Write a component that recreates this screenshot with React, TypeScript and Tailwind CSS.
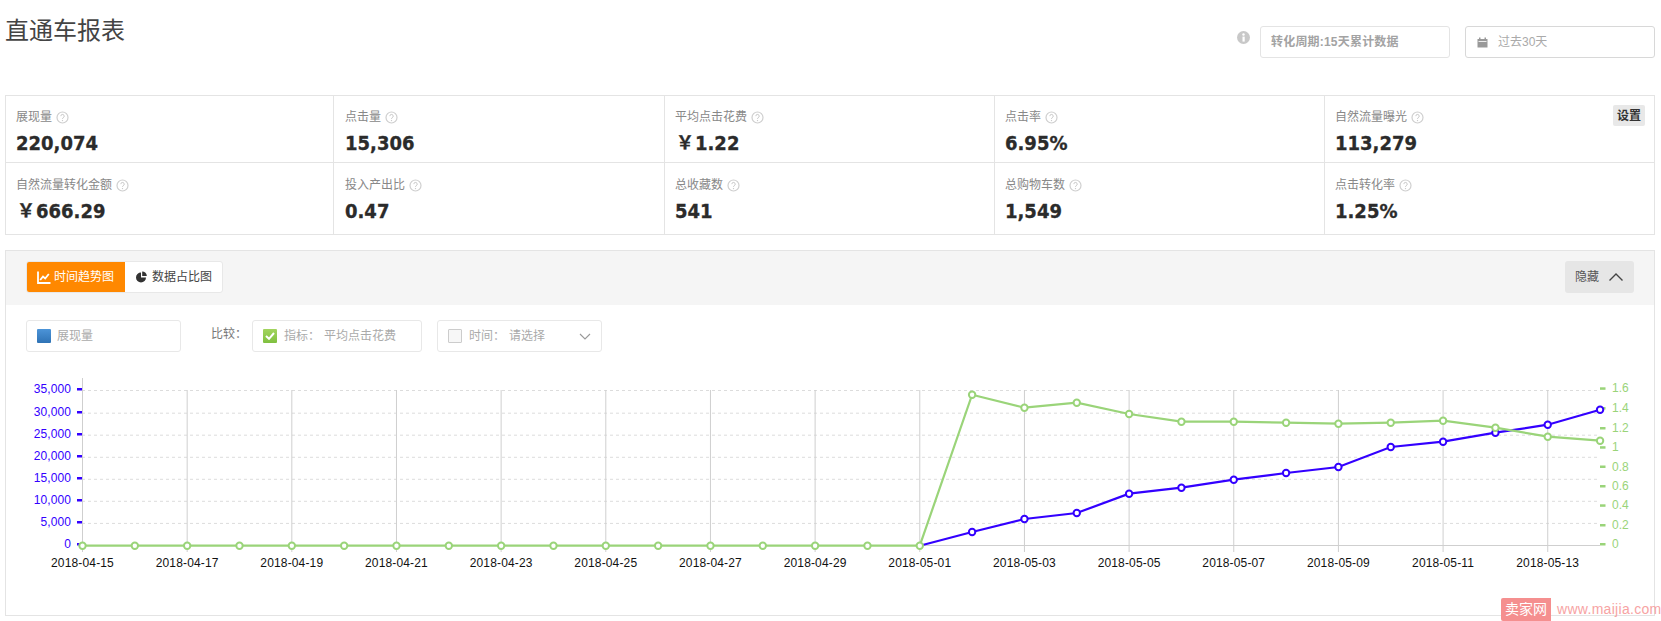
import React from "react";

const CJK = '"Liberation Sans","Noto Sans CJK SC",sans-serif';

const cells = [
  ["展现量", "220,074"],
  ["点击量", "15,306"],
  ["平均点击花费", "￥1.22"],
  ["点击率", "6.95%"],
  ["自然流量曝光", "113,279"],
  ["自然流量转化金额", "￥666.29"],
  ["投入产出比", "0.47"],
  ["总收藏数", "541"],
  ["总购物车数", "1,549"],
  ["点击转化率", "1.25%"],
];

function Help() {
  return (
    <svg width="13" height="13" viewBox="0 0 13 13" className="ml-[4px] shrink-0">
      <circle cx="6.5" cy="6.5" r="5.5" fill="none" stroke="#cfcfcf" strokeWidth="1.2" />
      <path d="M4.8 5.1a1.7 1.7 0 1 1 2.6 1.5c-.6.4-.9.7-.9 1.3" fill="none" stroke="#c4c4c4" strokeWidth="1" />
      <circle cx="6.5" cy="9.6" r=".7" fill="#c4c4c4" />
    </svg>
  );
}

function Cell({ label, value, index }: { label: string; value: string; index: number }) {
  const top = index < 5;
  const last = index % 5 === 4;
  const yen = value.startsWith("￥");
  const second = index % 5 === 1;
  return (
    <div
      className={`relative ${second ? "pl-[11px]" : "pl-[10px]"} ${top ? "h-[67px] border-b border-[#e4e4e4] pt-[11px]" : "h-[71px] pt-[12px]"} ${last ? "" : "border-r border-[#e4e4e4]"}`}
    >
      <div className="flex items-center h-[20px] text-[12px] text-[#888888]">
        {label}
        <Help />
      </div>
      <div
        className={`mt-[3px] text-[20px] leading-[26px] font-bold text-[#2b2b2b] [-webkit-text-stroke:0.3px_#2b2b2b] ${yen ? "flex items-center" : ""}`}
        style={{ fontFamily: '"DejaVu Sans Condensed","Noto Sans","Noto Sans CJK SC",sans-serif' }}
      >
        {yen ? (
          <>
            <span className="w-[20px] text-center text-[18px]" style={{ fontFamily: CJK }}>￥</span>
            {value.slice(1)}
          </>
        ) : (
          value
        )}
      </div>
      {index === 4 && (
        <div className="absolute right-[9px] top-[9px] w-[32px] h-[21px] rounded-[2px] bg-[#e8e8e8] text-[12px] font-bold text-[#333] flex items-center justify-center">
          设置
        </div>
      )}
    </div>
  );
}

const X0 = 82.5;
const STEP = 52.33;
const xAt = (i: number) => X0 + i * STEP;
const BLUE = "#3300ff";
const GREEN = "#9ad479";

const startDate = Date.UTC(2018, 3, 15);
const dateLabel = (i: number) => new Date(startDate + i * 86400000).toISOString().slice(0, 10);

const blueTail = [545.7, 532, 519, 513, 493.7, 487.7, 479.7, 473, 467, 447, 441.7, 432.7, 424.7, 409.7];
const greenTail = [394.7, 407.7, 402.7, 414, 421.7, 421.7, 422.7, 423.7, 422.7, 420.7, 427.7, 436.7, 440.7];

const greenPts: [number, number][] = [
  ...Array.from({ length: 17 }, (_, i) => [xAt(i), 545.7] as [number, number]),
  ...greenTail.map((y, i) => [xAt(17 + i), y] as [number, number]),
];
const bluePts: [number, number][] = blueTail.map((y, i) => [xAt(16 + i), y]);

const grid = [390, 412.7, 434.7, 456.8, 478.8, 500.8, 522.9];
const leftTicks: [string, number][] = [
  ["35,000", 389],
  ["30,000", 412],
  ["25,000", 434],
  ["20,000", 456],
  ["15,000", 478],
  ["10,000", 500],
  ["5,000", 522],
  ["0", 544],
];
const rightTicks: [string, number][] = [
  ["1.6", 388.3],
  ["1.4", 408],
  ["1.2", 428],
  ["1", 447.2],
  ["0.8", 466.5],
  ["0.6", 486],
  ["0.4", 505.3],
  ["0.2", 525],
  ["0", 544],
];

function Chart() {
  const even = Array.from({ length: 15 }, (_, i) => i * 2);
  return (
    <svg width="1648" height="230" viewBox="6 370 1648 230" className="block">
      {grid.map((y) => (
        <line key={y} x1={82} x2={1600} y1={y + 0.5} y2={y + 0.5} stroke="#dcdcdc" strokeDasharray="3 3" />
      ))}
      {even.map((i) => (
        <line key={i} x1={xAt(i)} x2={xAt(i)} y1={i === 0 ? 378 : 390} y2={552} stroke="#cfcfcf" />
      ))}
      <line x1={82} x2={1600} y1={545.5} y2={545.5} stroke="#cfcfcf" />
      {leftTicks.map(([t, y]) => (
        <g key={t}>
          <rect x={77} y={y - 1} width={5} height={2.5} fill={BLUE} />
          <text x={71} y={y + 4} textAnchor="end" fontSize="12" letterSpacing="0.1" fill={BLUE} fontFamily='"Liberation Sans",sans-serif'>
            {t}
          </text>
        </g>
      ))}
      {rightTicks.map(([t, y]) => (
        <g key={t}>
          <rect x={1600} y={y - 1} width={5.5} height={2.5} fill={GREEN} />
          <text x={1612} y={y + 4} fontSize="12" fill={GREEN} fontFamily='"Liberation Sans",sans-serif'>
            {t}
          </text>
        </g>
      ))}
      {even.map((i) => (
        <text key={i} x={xAt(i)} y={567} textAnchor="middle" fontSize="12" letterSpacing="0.15" fill="#111" fontFamily='"Liberation Sans",sans-serif'>
          {dateLabel(i)}
        </text>
      ))}
      <polyline points={bluePts.map((p) => p.join(",")).join(" ")} fill="none" stroke={BLUE} strokeWidth="2.2" />
      {bluePts.slice(1).map(([x, y]) => (
        <circle key={x} cx={x} cy={y} r={3.2} fill="#fff" stroke={BLUE} strokeWidth="2" />
      ))}
      <polyline points={greenPts.map((p) => p.join(",")).join(" ")} fill="none" stroke={GREEN} strokeWidth="2.2" />
      {greenPts.map(([x, y]) => (
        <circle key={x} cx={x} cy={y} r={3.2} fill="#fff" stroke={GREEN} strokeWidth="2" />
      ))}
    </svg>
  );
}

export default function App() {
  return (
    <div className="relative w-[1661px] h-[621px] overflow-hidden bg-white" style={{ fontFamily: CJK }}>
      <header className="flex h-[95px] pl-[5px] pr-[6px]">
        <h1 className="text-[24px] leading-[32px] mt-[15px] font-normal text-[#444444]">直通车报表</h1>
        <div className="ml-auto flex items-start pt-[26px]">
          <svg width="13" height="13" viewBox="0 0 13 13" className="mt-[5px] mr-[10px]">
            <circle cx="6.5" cy="6.5" r="6.5" fill="#c8c8c8" />
            <rect x="5.5" y="5.6" width="2.2" height="5" fill="#fff" />
            <circle cx="6.5" cy="3.5" r="1.2" fill="#fff" />
          </svg>
          <div className="w-[190px] h-[32px] rounded-[3px] border border-[#e4e4e4] pl-[10px] flex items-center text-[12px] tracking-[0.2px] font-bold text-[#a3a3a3]">
            转化周期:15天累计数据
          </div>
          <div className="ml-[15px] w-[190px] h-[32px] rounded-[3px] border border-[#d8d8d8] pl-[11px] flex items-center text-[12px] text-[#aaaaaa]">
            <svg width="11" height="11" viewBox="0 0 11 11" className="mr-[10px]">
              <path d="M0.5 2h10v8.5h-10z" fill="#999" />
              <rect x="2" y="0.5" width="1.5" height="2" fill="#999" />
              <rect x="7.5" y="0.5" width="1.5" height="2" fill="#999" />
              <rect x="1.5" y="4" width="8" height="0.8" fill="#fff" />
            </svg>
            过去30天
          </div>
        </div>
      </header>

      <section className="ml-[5px] w-[1650px] border border-[#e4e4e4] grid grid-cols-[328px_331px_330px_330px_329px]">
        {cells.map(([label, value], i) => (
          <Cell key={label} label={label} value={value} index={i} />
        ))}
      </section>

      <section className="ml-[5px] mt-[15px] w-[1650px] h-[366px] border border-[#e4e4e4]">
        <div className="h-[54px] bg-[#f5f5f5] flex items-start pl-[20px] pr-[20px] pt-[10px]">
          <div className="flex h-[32px] w-[197px] rounded-[3px] overflow-hidden border border-[#e8e8e8] bg-white">
            <div className="w-[99px] -ml-px -my-px bg-[#ff8800] text-white text-[12px] flex items-center pl-[11px] shrink-0">
              <svg width="14" height="13" viewBox="0 0 14 13" className="mr-[3px]">
                <path d="M1 0.5v11.5h12.5" fill="none" stroke="#fff" strokeWidth="1.8" />
                <path d="M3.2 9l2.8-3.5 2.2 2 3.6-4.5" fill="none" stroke="#fff" strokeWidth="1.8" />
              </svg>
              时间趋势图
            </div>
            <div className="flex-1 flex items-center pl-[11px] text-[12px] text-[#444444]">
              <svg width="11" height="12" viewBox="0 0 11 12" className="mr-[5px]">
                <path d="M5 1.5a5 5 0 1 0 5 5h-5z" fill="#333" />
                <path d="M6.2 0.5a4.6 4.6 0 0 1 4.6 4.6h-4.6z" fill="#333" />
              </svg>
              数据占比图
            </div>
          </div>
          <div className="ml-auto w-[69px] h-[32px] rounded-[3px] bg-[#e6e6e6] text-[12px] text-[#555555] flex items-center pl-[10px]">
            隐藏
            <svg width="16" height="10" viewBox="0 0 16 10" className="ml-[9px]">
              <path d="M1.5 8.5L8 2l6.5 6.5" fill="none" stroke="#444" strokeWidth="1.4" />
            </svg>
          </div>
        </div>

        <div className="h-[65px] flex items-start pt-[15px] pl-[20px] text-[12px]">
          <div className="w-[155px] h-[32px] rounded-[3px] border border-[#e8e8e8] flex items-center pl-[10px] text-[#aaaaaa]">
            <span className="w-[14px] h-[14px] rounded-[1px] mr-[6px] bg-gradient-to-b from-[#4c94d8] to-[#2f73b5]" />
            展现量
          </div>
          <span className="ml-[30px] mt-[5px] text-[#777777]">比较：</span>
          <div className="ml-[5px] w-[170px] h-[32px] rounded-[3px] border border-[#e8e8e8] flex items-center pl-[10px] text-[#aaaaaa]">
            <span className="w-[14px] h-[14px] rounded-[1px] mr-[7px] bg-gradient-to-b from-[#a2d45e] to-[#7fc03f] flex items-center justify-center">
              <svg width="10" height="8" viewBox="0 0 10 8">
                <path d="M1 4l3 2.8L9 1" fill="none" stroke="#fff" strokeWidth="2" />
              </svg>
            </span>
            指标：
            <span className="ml-[4px]">平均点击花费</span>
          </div>
          <div className="ml-[15px] w-[165px] h-[32px] rounded-[3px] border border-[#e8e8e8] flex items-center pl-[10px] text-[#aaaaaa]">
            <span className="w-[14px] h-[14px] rounded-[1px] mr-[7px] border border-[#cccccc] bg-[#f7f7f7]" />
            时间：
            <span className="ml-[4px]">请选择</span>
            <svg width="12" height="7" viewBox="0 0 12 7" className="ml-auto mr-[10px]">
              <path d="M1 1l5 5 5-5" fill="none" stroke="#999" strokeWidth="1.1" />
            </svg>
          </div>
        </div>

        <Chart />
      </section>

      <div className="absolute right-0 bottom-0 flex items-center h-[23px]">
        <div className="w-[50px] h-[23px] bg-[#f58f8f] rounded-tl-[2px] rounded-bl-[2px] text-white text-[14px] flex items-center justify-center">
          卖家网
        </div>
        <span className="w-[110px] pl-[6px] text-[14px] tracking-[0.3px] text-[#f7a3a3] whitespace-nowrap">www.maijia.com</span>
      </div>
    </div>
  );
}
